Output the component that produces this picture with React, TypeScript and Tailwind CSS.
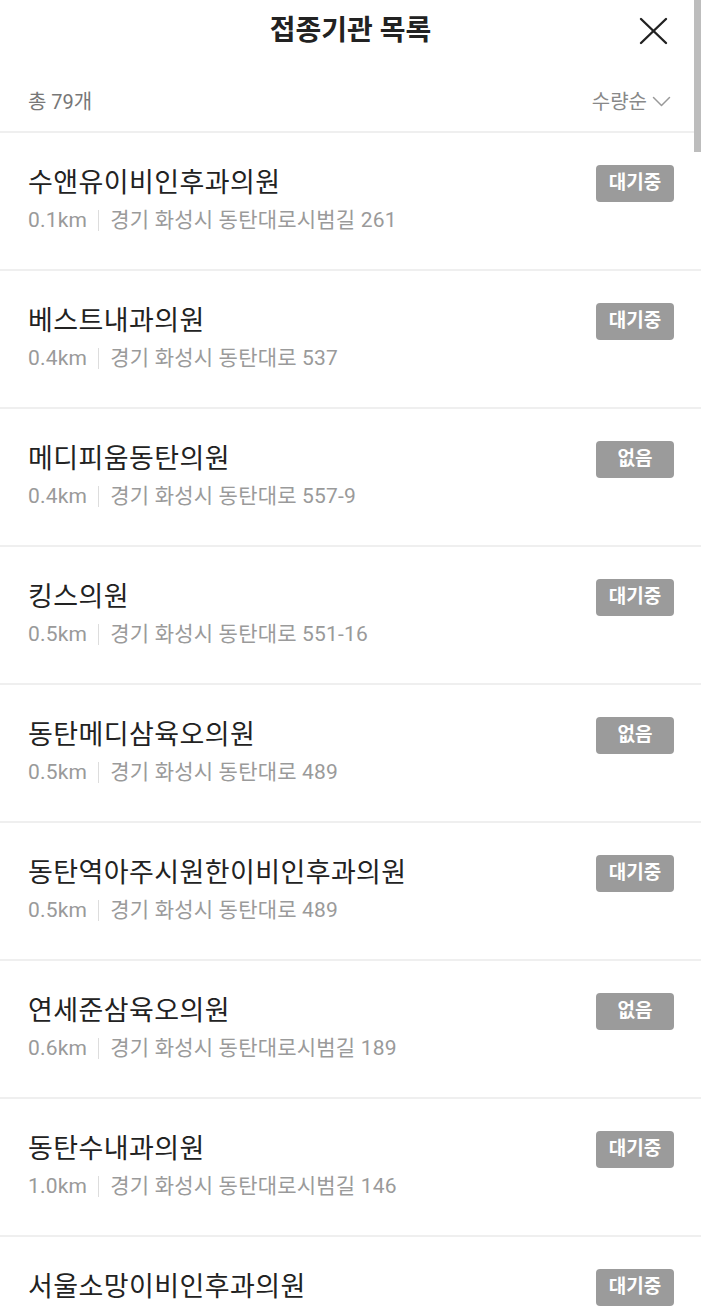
type Clinic = {
  name: string;
  distance: string;
  address: string;
  status: "대기중" | "없음";
};

const CLINICS: Clinic[] = [
  { name: "수앤유이비인후과의원", distance: "0.1km", address: "경기 화성시 동탄대로시범길 261", status: "대기중" },
  { name: "베스트내과의원", distance: "0.4km", address: "경기 화성시 동탄대로 537", status: "대기중" },
  { name: "메디피움동탄의원", distance: "0.4km", address: "경기 화성시 동탄대로 557-9", status: "없음" },
  { name: "킹스의원", distance: "0.5km", address: "경기 화성시 동탄대로 551-16", status: "대기중" },
  { name: "동탄메디삼육오의원", distance: "0.5km", address: "경기 화성시 동탄대로 489", status: "없음" },
  { name: "동탄역아주시원한이비인후과의원", distance: "0.5km", address: "경기 화성시 동탄대로 489", status: "대기중" },
  { name: "연세준삼육오의원", distance: "0.6km", address: "경기 화성시 동탄대로시범길 189", status: "없음" },
  { name: "동탄수내과의원", distance: "1.0km", address: "경기 화성시 동탄대로시범길 146", status: "대기중" },
  { name: "서울소망이비인후과의원", distance: "1.1km", address: "경기 화성시 동탄대로시범길 133", status: "대기중" },
];

export default function App() {
  return (
    <div
      className="relative w-[701px] h-[1306px] overflow-hidden bg-white"
      style={{ fontFamily: 'Roboto, "Noto Sans CJK KR", sans-serif' }}
    >
      {/* 헤더 */}
      <div className="relative flex h-[62px] items-center justify-center">
        <h1 className="text-[28px] font-bold leading-[34px] text-[#222]">접종기관 목록</h1>
        <button className="absolute left-[638px] top-[16px] text-[#222]">
          <svg width="31" height="30" viewBox="0 0 31 30" fill="none" stroke="currentColor" strokeWidth="2.4" strokeLinecap="round">
            <path d="M3 3 L28 27" />
            <path d="M28 3 L3 27" />
          </svg>
        </button>
      </div>

      {/* 총 개수 / 정렬 */}
      <div className="flex h-[71px] items-center justify-between px-[28px] pt-[10px] border-b-2 border-[#efefef]">
        <span className="text-[20px] leading-[26px] text-[#777]">총 79개</span>
        <span className="flex items-center gap-[5px] pr-[2px] text-[20px] leading-[26px] text-[#888]">
          수량순
          <svg width="19" height="11" viewBox="0 0 19 11" fill="none" stroke="#999" strokeWidth="1.5" strokeLinecap="round" strokeLinejoin="round">
            <path d="M1.5 1.5 L9.5 9.5 L17.5 1.5" />
          </svg>
        </span>
      </div>

      <ul>
        {CLINICS.map((c) => (
          <li key={c.name} className="flex h-[138px] justify-between border-b-2 border-[#efefef] pl-[28px] pr-[27px] pt-[32px]">
            <div className="mt-[1px] flex flex-col">
              <p className="text-[27px] leading-[34px] tracking-[0.4px] text-[#222]">{c.name}</p>
              <p className="mt-[6px] flex items-center text-[21px] leading-[28px] tracking-[0.2px] text-[#9a9a9a]">
                {c.distance}
                <span className="mx-[11px] h-[21px] w-px bg-[#dddddd]" />
                {c.address}
              </p>
            </div>
            <span className="flex h-[37px] w-[78px] items-center justify-center rounded-[4px] bg-[#9b9b9b] text-[19px] font-bold text-white">
              {c.status}
            </span>
          </li>
        ))}
      </ul>

      {/* 스크롤 표시 */}
      <div className="absolute right-0 top-0 h-[152px] w-[7px] bg-[#bdbdbd]" />
    </div>
  );
}
